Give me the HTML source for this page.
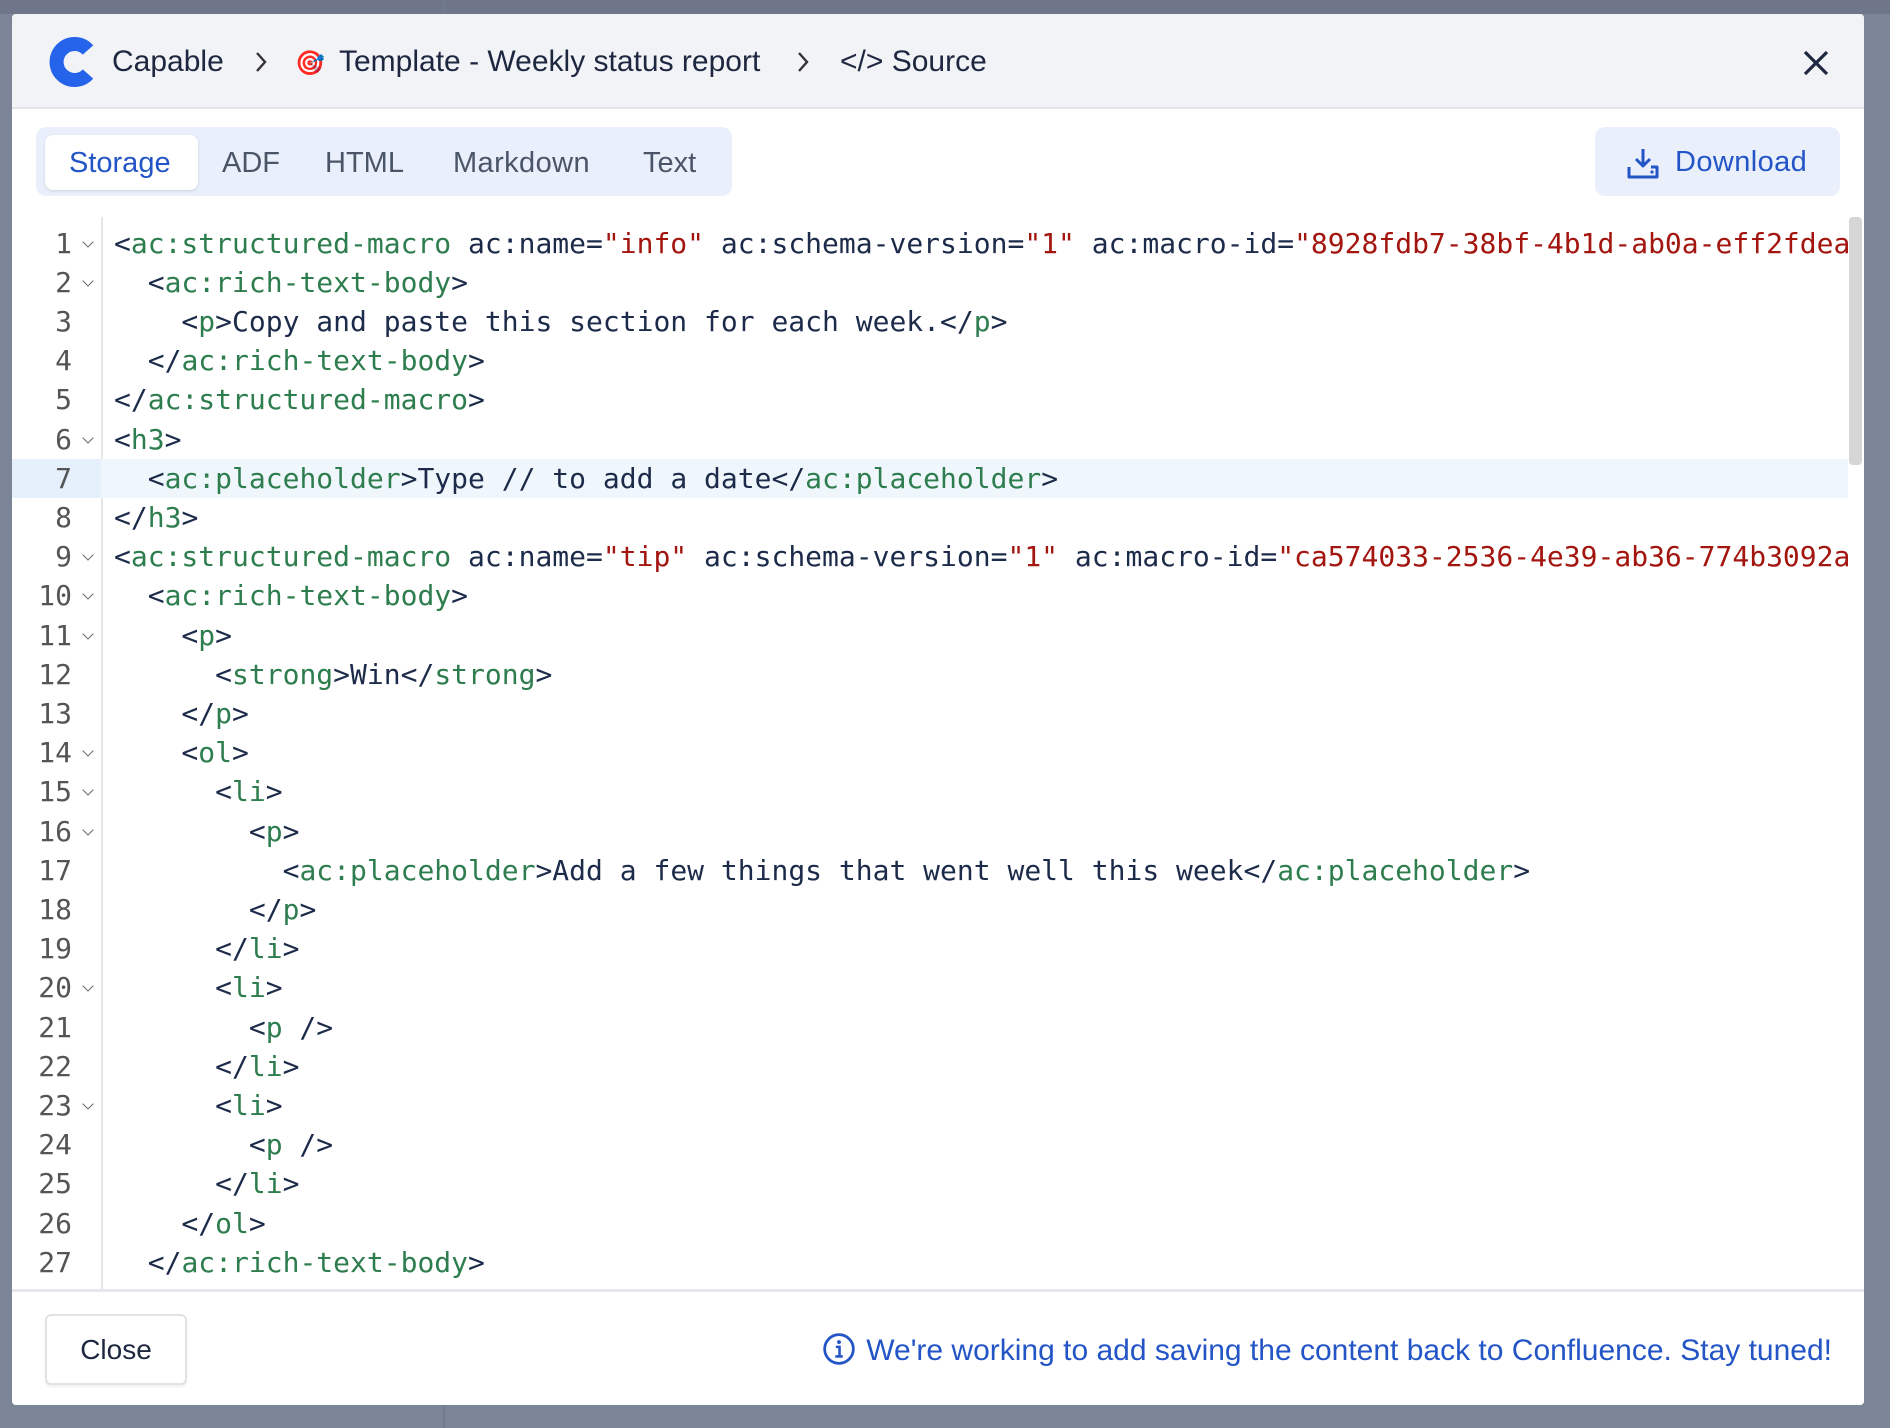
<!DOCTYPE html>
<html><head><meta charset="utf-8"><style>
*{box-sizing:border-box;margin:0;padding:0}
body{width:1890px;height:1428px;background:#7c8497;font-family:"Liberation Sans",sans-serif;position:relative;overflow:hidden}
.topbar{position:absolute;left:0;top:0;width:1890px;height:14px;background:#6f7689}
.vline{position:absolute;left:443px;top:0;width:2px;height:1428px;background:#727a8d}
.modal{position:absolute;left:12px;top:14px;width:1852px;height:1391px;background:#fff;border-radius:4px;overflow:hidden}
.hdr{position:absolute;left:0;top:0;width:100%;height:95px;background:#f2f3f6;border-bottom:2px solid #e3e4e9}
.hdr .t{position:absolute;top:31px;font-size:30px;color:#1e2740;white-space:nowrap}
.tabs{position:absolute;left:24px;top:113px;width:696px;height:69px;background:#e9effb;border-radius:10px}
.act{position:absolute;left:9px;top:8px;width:153px;height:55px;background:#fff;border-radius:8px;box-shadow:0 1px 3px rgba(0,0,0,.12)}
.tab{position:absolute;top:20px;font-size:29px;color:#4a5568}
.dl{position:absolute;left:1583px;top:113px;width:245px;height:69px;background:#e9effb;border-radius:10px;color:#2355c7;font-size:29px}
.code{position:absolute;left:0;top:203px;width:1836px;height:1072px;overflow:hidden;font-family:"DejaVu Sans Mono","Liberation Mono",monospace;font-size:28px}
.gut{position:absolute;left:89px;top:0;width:2px;height:100%;background:#e6e6e9}
.ln{position:absolute;left:0;height:39.2px;line-height:39.2px;width:100%;white-space:pre;color:#1d2b4a}
.ln .n{position:absolute;left:0;width:60px;text-align:right;color:#555}
.ln .f{position:absolute;left:69px;top:8px;width:14px;height:14px}
.ln .f::after{content:"";position:absolute;left:3px;top:6px;width:7px;height:7px;border-right:1.6px solid #666;border-bottom:1.6px solid #666;transform:rotate(45deg)}
.ln .c{position:absolute;left:102px}
.hl{background:#f0f7fc}
.hl .n{background:#e6f0fc}
.g{color:#2e7d4f}.r{color:#a3150f}
.sb{position:absolute;left:1836px;top:203px;width:16px;height:1072px;background:#fff}
.thumb{position:absolute;left:1837px;top:203px;width:13px;height:248px;background:#d6d6d6;border-radius:4px}
.foot{position:absolute;left:0;top:1275px;width:100%;height:116px;border-top:3px solid #e6e6ec;background:#fff}
.close{position:absolute;left:33px;top:22px;width:142px;height:71px;border:2px solid #e1e2e6;border-radius:6px;font-size:28px;color:#1e2740;text-align:center;line-height:67px;box-shadow:0 2px 2px rgba(0,0,0,.06)}
.info{position:absolute;right:32px;top:40px;font-size:30px;color:#2355c7;white-space:nowrap}
</style></head><body>
<div class="topbar"></div><div class="vline"></div>
<div class="modal">
 <div class="hdr">
  <svg style="position:absolute;left:36px;top:22px" width="50" height="52" viewBox="0 0 50 52"><path d="M40 14 A18 18 0 1 0 40 38" fill="none" stroke="#2563eb" stroke-width="14"/></svg>
  <div class="t" style="left:100px">Capable</div>
  <svg style="position:absolute;left:242px;top:37px" width="14" height="22" viewBox="0 0 14 22"><path d="M3 2l8 9-8 9" fill="none" stroke="#333" stroke-width="2.4"/></svg>
  <div class="t" style="left:283px;font-size:24px;top:35px">🎯</div>
  <div class="t" style="left:327px">Template - Weekly status report</div>
  <svg style="position:absolute;left:784px;top:37px" width="14" height="22" viewBox="0 0 14 22"><path d="M3 2l8 9-8 9" fill="none" stroke="#333" stroke-width="2.4"/></svg>
  <div class="t" style="left:828px">&lt;/&gt; Source</div>
  <svg style="position:absolute;left:1790px;top:35px" width="28" height="28" viewBox="0 0 28 28"><path d="M3 3L25 25M25 3L3 25" stroke="#1e2740" stroke-width="3.2"/></svg>
 </div>
 <div class="tabs"><div class="act"></div>
  <div class="tab" style="left:33px;color:#2355c7">Storage</div>
  <div class="tab" style="left:186px">ADF</div>
  <div class="tab" style="left:289px">HTML</div>
  <div class="tab" style="left:417px;letter-spacing:0.4px">Markdown</div>
  <div class="tab" style="left:607px">Text</div>
 </div>
 <div class="dl">
  <svg style="position:absolute;left:31px;top:20px" width="34" height="32" viewBox="0 0 34 32"><path d="M17 2V19M10 12l7 7 7-7M3 20v10h28V20h-6" fill="none" stroke="#2355c7" stroke-width="3" stroke-linejoin="round"/><circle cx="26" cy="25" r="1.6" fill="#2355c7"/></svg>
  <div style="position:absolute;left:80px;top:19px;letter-spacing:0.4px">Download</div>
 </div>
 <div class="code">
  <div class="gut"></div>
  <div class="ln" style="top:6.5px"><span class="n">1</span><span class="f"></span><span class="c">&lt;<span class="g">ac:structured-macro</span> ac:name=<span class="r">"info"</span> ac:schema-version=<span class="r">"1"</span> ac:macro-id=<span class="r">"8928fdb7-38bf-4b1d-ab0a-eff2fdea</span></span></div>
  <div class="ln" style="top:45.7px"><span class="n">2</span><span class="f"></span><span class="c">  &lt;<span class="g">ac:rich-text-body</span>&gt;</span></div>
  <div class="ln" style="top:84.9px"><span class="n">3</span><span class="c">    &lt;<span class="g">p</span>&gt;Copy and paste this section for each week.&lt;/<span class="g">p</span>&gt;</span></div>
  <div class="ln" style="top:124.1px"><span class="n">4</span><span class="c">  &lt;/<span class="g">ac:rich-text-body</span>&gt;</span></div>
  <div class="ln" style="top:163.3px"><span class="n">5</span><span class="c">&lt;/<span class="g">ac:structured-macro</span>&gt;</span></div>
  <div class="ln" style="top:202.5px"><span class="n">6</span><span class="f"></span><span class="c">&lt;<span class="g">h3</span>&gt;</span></div>
  <div class="ln hl" style="top:241.7px"><span class="n" style="width:89px;padding-right:29px">7</span><span class="c">  &lt;<span class="g">ac:placeholder</span>&gt;Type // to add a date&lt;/<span class="g">ac:placeholder</span>&gt;</span></div>
  <div class="ln" style="top:280.9px"><span class="n">8</span><span class="c">&lt;/<span class="g">h3</span>&gt;</span></div>
  <div class="ln" style="top:320.1px"><span class="n">9</span><span class="f"></span><span class="c">&lt;<span class="g">ac:structured-macro</span> ac:name=<span class="r">"tip"</span> ac:schema-version=<span class="r">"1"</span> ac:macro-id=<span class="r">"ca574033-2536-4e39-ab36-774b3092a</span></span></div>
  <div class="ln" style="top:359.3px"><span class="n">10</span><span class="f"></span><span class="c">  &lt;<span class="g">ac:rich-text-body</span>&gt;</span></div>
  <div class="ln" style="top:398.5px"><span class="n">11</span><span class="f"></span><span class="c">    &lt;<span class="g">p</span>&gt;</span></div>
  <div class="ln" style="top:437.7px"><span class="n">12</span><span class="c">      &lt;<span class="g">strong</span>&gt;Win&lt;/<span class="g">strong</span>&gt;</span></div>
  <div class="ln" style="top:476.9px"><span class="n">13</span><span class="c">    &lt;/<span class="g">p</span>&gt;</span></div>
  <div class="ln" style="top:516.1px"><span class="n">14</span><span class="f"></span><span class="c">    &lt;<span class="g">ol</span>&gt;</span></div>
  <div class="ln" style="top:555.3px"><span class="n">15</span><span class="f"></span><span class="c">      &lt;<span class="g">li</span>&gt;</span></div>
  <div class="ln" style="top:594.5px"><span class="n">16</span><span class="f"></span><span class="c">        &lt;<span class="g">p</span>&gt;</span></div>
  <div class="ln" style="top:633.7px"><span class="n">17</span><span class="c">          &lt;<span class="g">ac:placeholder</span>&gt;Add a few things that went well this week&lt;/<span class="g">ac:placeholder</span>&gt;</span></div>
  <div class="ln" style="top:672.9px"><span class="n">18</span><span class="c">        &lt;/<span class="g">p</span>&gt;</span></div>
  <div class="ln" style="top:712.1px"><span class="n">19</span><span class="c">      &lt;/<span class="g">li</span>&gt;</span></div>
  <div class="ln" style="top:751.3px"><span class="n">20</span><span class="f"></span><span class="c">      &lt;<span class="g">li</span>&gt;</span></div>
  <div class="ln" style="top:790.5px"><span class="n">21</span><span class="c">        &lt;<span class="g">p</span> /&gt;</span></div>
  <div class="ln" style="top:829.7px"><span class="n">22</span><span class="c">      &lt;/<span class="g">li</span>&gt;</span></div>
  <div class="ln" style="top:868.9px"><span class="n">23</span><span class="f"></span><span class="c">      &lt;<span class="g">li</span>&gt;</span></div>
  <div class="ln" style="top:908.1px"><span class="n">24</span><span class="c">        &lt;<span class="g">p</span> /&gt;</span></div>
  <div class="ln" style="top:947.3px"><span class="n">25</span><span class="c">      &lt;/<span class="g">li</span>&gt;</span></div>
  <div class="ln" style="top:986.5px"><span class="n">26</span><span class="c">    &lt;/<span class="g">ol</span>&gt;</span></div>
  <div class="ln" style="top:1025.7px"><span class="n">27</span><span class="c">  &lt;/<span class="g">ac:rich-text-body</span>&gt;</span></div>
 </div>
 <div class="sb"></div><div class="thumb"></div>
 <div class="foot">
  <div class="close">Close</div>
  <div class="info"><svg style="vertical-align:-6px;margin-right:10px" width="34" height="34" viewBox="0 0 32 32"><circle cx="16" cy="16" r="13.5" fill="none" stroke="#2355c7" stroke-width="2.6"/><circle cx="16" cy="9.5" r="1.8" fill="#2355c7"/><path d="M13 14h3.5v9M12.5 23h7" fill="none" stroke="#2355c7" stroke-width="2.4"/></svg>We're working to add saving the content back to Confluence. Stay tuned!</div>
 </div>
</div>
</body></html>
